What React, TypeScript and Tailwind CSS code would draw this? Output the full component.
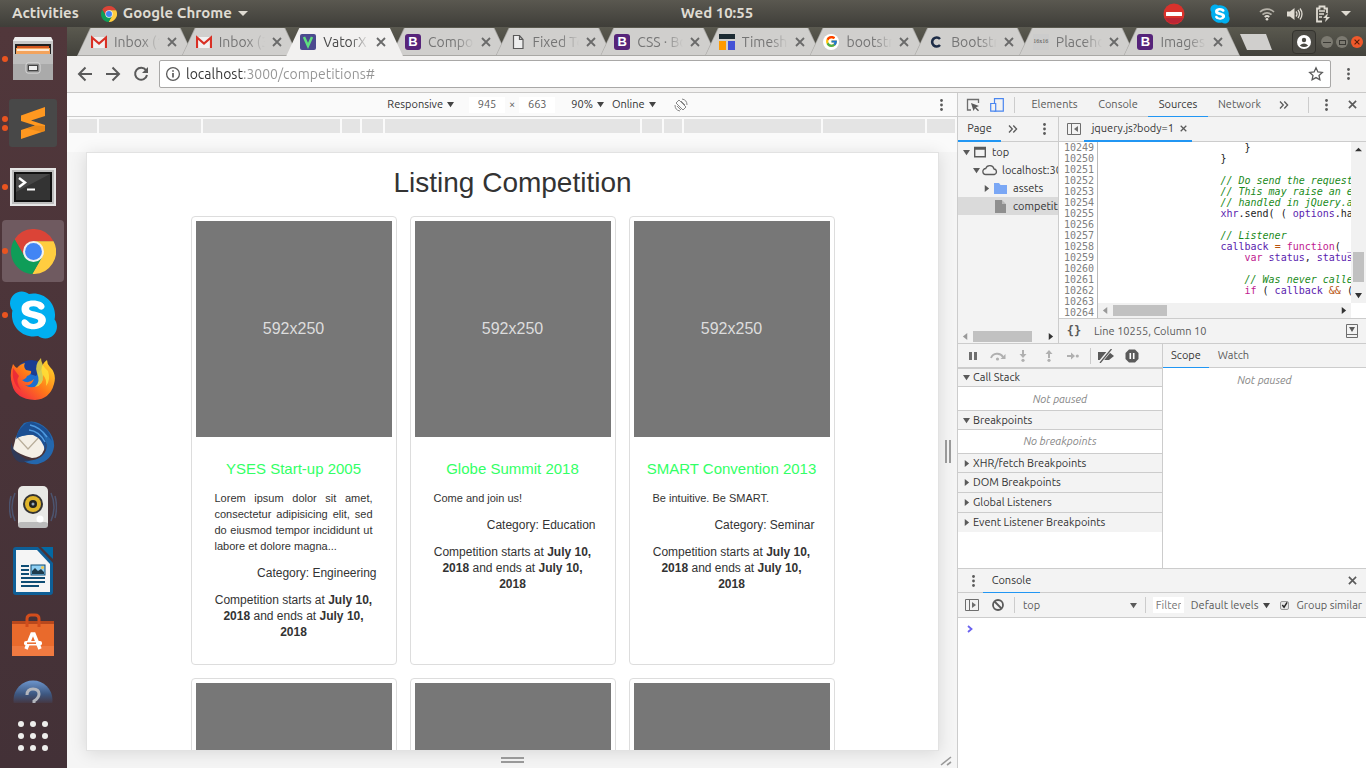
import React from 'react';
import { FaSkype } from 'react-icons/fa';
import { FcGoogle } from 'react-icons/fc';

/* ---------- small shared pieces ---------- */

function Cross({ className = 'size-2 text-[#5a5a5a]' }: { className?: string }) {
  return (
    <svg viewBox="0 0 10 10" className={className} fill="none" stroke="currentColor" strokeWidth="1.8">
      <path d="M1 1l8 8M9 1l-8 8" />
    </svg>
  );
}

function Dots({ className = 'h-3 w-[3px] text-[#5a5a5a]' }: { className?: string }) {
  return (
    <svg viewBox="0 0 3 12" className={className} fill="currentColor">
      <circle cx="1.5" cy="1.5" r="1.4" />
      <circle cx="1.5" cy="6" r="1.4" />
      <circle cx="1.5" cy="10.5" r="1.4" />
    </svg>
  );
}

function Chevrons() {
  return (
    <svg viewBox="0 0 10 8" className="h-2 w-2.5 text-[#5a5a5a]" fill="none" stroke="currentColor" strokeWidth="1.3">
      <path d="M1 .5L4.300 4 1 7.500M5.300 .5L8.600 4 5.300 7.500" />
    </svg>
  );
}

function Tri({ dir, className = 'text-[#5a5a5a]' }: { dir: 'down' | 'right' | 'left' | 'up'; className?: string }) {
  const d = {
    down: 'M0 1h8L4 7z',
    up: 'M0 6h8L4 2z',
    right: 'M2 0v8l5-4z',
    left: 'M6 0v8L1 4z',
  }[dir];
  return (
    <svg viewBox="0 0 8 8" className={`size-[7px] shrink-0 ${className}`} fill="currentColor">
      <path d={d} />
    </svg>
  );
}

function ChromeLogo({ className }: { className: string }) {
  return (
    <svg viewBox="2 2 44 44" className={className}>
      <path fill="#db4437" d="M5.540 12.030A22 22 0 0 1 43.600 14H24L15.340 29z" />
      <path fill="#ffcd40" d="M43.600 14A22 22 0 0 1 22.860 45.970L32.660 29 24 14z" />
      <path fill="#0f9d58" d="M22.860 45.970A22 22 0 0 1 5.540 12.030L15.340 29h17.320z" />
      <circle cx="24" cy="24" r="10.200" fill="#f1f1f1" />
      <circle cx="24" cy="24" r="8.200" fill="#4285f4" />
    </svg>
  );
}

function SkypeLogo({ className }: { className: string }) {
  return (
    <span className="relative flex items-center justify-center">
      <span className="absolute inset-[20%] rounded-full bg-white" />
      <FaSkype className={`relative text-[#00aff0] ${className}`} />
    </span>
  );
}

/* ---------- top bar ---------- */

function TopBar() {
  return (
    <header className="grid h-[27px] shrink-0 grid-cols-[1fr_auto_1fr] items-center bg-linear-to-b from-[#5a5850] to-[#3f3e39] text-[15px] font-bold text-[#dfdbd2]">
      <div className="flex items-center pl-3">
        <button className="mr-[22px]">Activities</button>
        <ChromeLogo className="mr-1.5 size-4" />
        <button className="flex items-center gap-1.5">
          Google Chrome
          <svg viewBox="0 0 10 6" className="h-1.5 w-2.5" fill="currentColor"><path d="M0 0h10L5 5z" /></svg>
        </button>
      </div>
      <div className="pl-[68px]">Wed 10:55</div>
      <div className="flex items-center justify-end pr-[15px]">
        <svg viewBox="0 0 22 22" className="mr-6 size-[22px]">
          <circle cx="11" cy="11" r="10.500" fill="#d8322c" />
          <path d="M2 15a10 10 0 0 0 18 0z" fill="#a81d3c" opacity=".6" />
          <rect x="3" y="9" width="16" height="4" rx=".5" fill="#fff" />
        </svg>
        <span className="mr-7"><SkypeLogo className="size-[22px]" /></span>
        <svg viewBox="0 0 16 16" className="mr-3 size-4" fill="none" stroke="currentColor" strokeWidth="1.700">
          <path d="M1 6a10 10 0 0 1 14 0M3.500 8.700a6.500 6.500 0 0 1 9 0" opacity=".7" />
          <path d="M5.700 11a3.500 3.500 0 0 1 4.600 0" />
          <circle cx="8" cy="13.300" r="1.300" fill="currentColor" stroke="none" />
        </svg>
        <svg viewBox="0 0 16 16" className="mr-3 size-4" fill="currentColor">
          <path d="M0 5.500h3L7.500 2v12L3 10.500H0z" />
          <path d="M9 5.500q2 2.500 0 5M11 4q3 4 0 8M13 2.500q4 5.500 0 11" fill="none" stroke="currentColor" strokeWidth="1.300" />
        </svg>
        <svg viewBox="0 0 16 18" className="mr-2.5 h-[18px] w-4" fill="none" stroke="currentColor" strokeWidth="1.800">
          <path d="M7 16.500H2v-13h2.500v-2h5v2H12V8" />
          <path d="M4 6h6M4 9h5M4 12h3" strokeWidth="1.500" />
          <path d="M13 8l-5 5h3l-1 4 5-5h-3z" fill="currentColor" stroke="none" />
        </svg>
        <svg viewBox="0 0 10 6" className="h-1.5 w-2.5" fill="currentColor"><path d="M0 0h10L5 5z" /></svg>
      </div>
    </header>
  );
}

/* ---------- dock ---------- */

const FilesIcon = () => (
  <svg viewBox="0 0 44 46" className="h-[46px] w-11">
    <path d="M4 1h36l2 4v39H2V5z" fill="#c9c9c9" />
    <path d="M4 1h36l2 4H2z" fill="#eee" />
    <rect x="4" y="8" width="36" height="11" fill="#222" />
    <path d="M6 10h32v9H6z" fill="#d2551f" />
    <path d="M5 12h34v7H5z" fill="#f3a35c" />
    <path d="M6 14h32" stroke="#fff" strokeWidth="1.500" />
    <path d="M2 18h40v26H2z" fill="#aaa" />
    <path d="M2 18h40v10H2z" fill="#bdbdbd" />
    <rect x="15" y="27" width="14" height="10" rx="2" fill="#888" stroke="#ddd" />
    <rect x="17.500" y="29.500" width="9" height="5" fill="#eee" stroke="#444" />
  </svg>
);

const SublimeIcon = () => (
  <svg viewBox="0 0 48 48" className="size-12">
    <rect width="48" height="48" rx="3" fill="#484848" />
    <path d="M12 16.500L36 8v9l-14 4.500L36 26v6L12 40v-9l14-4.500L12 22z" fill="#ff9820" />
    <path d="M18 29.500l8-3 10 .5v5l-3 1z" fill="#d97b12" opacity=".55" />
  </svg>
);

const TerminalIcon = () => (
  <svg viewBox="0 0 46 38" className="h-[38px] w-[46px]">
    <rect x="1" y="1" width="44" height="36" fill="#bdbdbd" stroke="#e6e6e6" strokeWidth="2" />
    <rect x="4" y="4" width="38" height="30" fill="#111" />
    <rect x="6" y="6" width="34" height="26" fill="#333" />
    <path d="M6 6h34L6 24z" fill="#555" opacity=".6" />
    <path d="M9 10l6 4.500L9 19" fill="none" stroke="#fff" strokeWidth="2.400" />
    <path d="M17 21.500h8" stroke="#fff" strokeWidth="2" />
  </svg>
);

const FirefoxIcon = () => (
  <svg viewBox="0 0 46 46" className="size-[46px]">
    <defs>
      <linearGradient id="ffa" x1="0" y1="1" x2="1" y2="0">
        <stop offset="0" stopColor="#f0124f" />
        <stop offset=".5" stopColor="#ff7a18" />
        <stop offset="1" stopColor="#ffe52e" />
      </linearGradient>
    </defs>
    <circle cx="23" cy="23" r="17" fill="#1b6fd0" />
    <path d="M22 4a19 19 0 0 1 12 6l-8 10-12-4-5-7q6-5 13-5z" fill="#1a3d92" />
    <path d="M3 8q2 3 4 4 3-4 8-5-2 4 1 7l5 1q1 3-4 5-1 3-5 4 6 5 12-1-3 8-9 6 5 4 12 1 8-4 5-13-2-8 5-13 0 4 3 7 7 7 4 17-4 15-19 16Q5 43 2 28-1 18 3 8z" fill="url(#ffa)" />
    <path d="M31 2q-7 7-4 15 4 9-2 14 9-2 8-12 4 4 3 11 5-6 2-15-7-6-7-13z" fill="#ffe53b" opacity=".8" />
    <path d="M3 12q-2 15 8 22-6-9-2-14z" fill="#e8203a" opacity=".8" />
  </svg>
);

const ThunderbirdIcon = () => (
  <svg viewBox="0 0 46 46" className="size-[46px]">
    <path d="M14 3Q26-2 37 9q8 9 7 18-2 13-16 17-8 1-14-3 18 0 22-11 2-8-4-13-8-5-15-2L5 22Q7 10 14 3z" fill="#2467ad" />
    <path d="M6 17l24-4q7 8 4 17-3 8-12 8-12-3-19-9z" fill="#f4efe6" />
    <path d="M8 18l10 11 13-14" fill="none" stroke="#b8ad9a" strokeWidth="1.200" />
    <path d="M13 6Q19-1 27 4q12 3 15 17-4-6-10-8 6 9 3 18-2-12-12-16-9-1-17 4 1-8 7-13z" fill="#1c4f92" />
    <path d="M20 5q10 2 17 12M19 10q10 1 16 12" fill="none" stroke="#4f9ae0" strokeWidth="1.500" />
    <path d="M1 22q2 9 9 13 5 5 11 5-9 5-15 0-6-7-5-18z" fill="#173f77" opacity=".5" />
  </svg>
);

const SpeakerIcon = () => (
  <svg viewBox="0 0 48 46" className="h-[46px] w-12">
    <path d="M6 9q-6 14 0 28M2 12q-3 11 0 22M42 9q6 14 0 28M46 12q3 11 0 22" fill="none" stroke="#4f6386" strokeWidth="1.500" opacity=".7" />
    <rect x="9" y="2" width="30" height="42" rx="5" fill="#e9e9e6" />
    <rect x="9" y="38" width="30" height="6" rx="3" fill="#bbb" />
    <circle cx="24" cy="20" r="10" fill="#333" />
    <circle cx="24" cy="20" r="8" fill="#e0b52a" />
    <circle cx="24" cy="20" r="4" fill="#222" />
    <circle cx="24" cy="20" r="1.500" fill="#9ab" />
    <circle cx="31" cy="35" r="3.500" fill="#fff" />
  </svg>
);

const WriterIcon = () => (
  <svg viewBox="0 0 40 48" className="h-12 w-10">
    <path d="M3 0h22l15 16v29q0 3-3 3H3q-3 0-3-3V3q0-3 3-3z" fill="#0e5f97" />
    <path d="M28 0h12v12z" fill="#0369a3" />
    <path d="M3 3h21l13 14v28H3z" fill="#f5f5f5" />
    <path d="M8 19h8M8 23h8M8 27h8M8 31h24M8 35h24M8 39h18" stroke="#0e4d74" strokeWidth="1.800" />
    <rect x="18" y="18" width="14" height="10" fill="#8fd0f4" stroke="#0e4d74" />
    <path d="M19 27v-3l3-3 3 3 3-2 3 3v2z" fill="#1e3c4c" />
    <circle cx="29.500" cy="20.500" r="1.500" fill="#f5c84c" />
  </svg>
);

const SoftwareIcon = () => (
  <svg viewBox="0 0 42 44" className="h-11 w-[42px]">
    <path d="M0 8h42v35H0z" fill="#e96a2c" />
    <path d="M0 8h42v3H0z" fill="#b8481d" />
    <path d="M0 33h42v10H0z" fill="#f07a41" />
    <path d="M15 14V6q0-4 4-4h4q4 0 4 4v8" fill="none" stroke="#d24d1c" strokeWidth="3" />
    <path d="M14 36l6-15h2l6 15" fill="none" stroke="#fff" strokeWidth="3.500" />
    <rect x="12" y="28" width="18" height="4.500" rx="2" fill="#fff" />
    <path d="M15 30.200h9" stroke="#e96a2c" strokeWidth="1.500" />
  </svg>
);

type DockItem = { name: string; dots: number; icon: React.ReactNode; active?: boolean };
const dock: DockItem[] = [
  { name: 'Files', dots: 1, icon: <FilesIcon /> },
  { name: 'Sublime Text', dots: 2, icon: <SublimeIcon /> },
  { name: 'Terminal', dots: 1, icon: <TerminalIcon /> },
  { name: 'Google Chrome', dots: 1, icon: <ChromeLogo className="size-[45px]" />, active: true },
  { name: 'Skype', dots: 1, icon: <SkypeLogo className="h-[54px] w-[47px]" /> },
  { name: 'Firefox', dots: 0, icon: <FirefoxIcon /> },
  { name: 'Thunderbird', dots: 0, icon: <ThunderbirdIcon /> },
  { name: 'Rhythmbox', dots: 0, icon: <SpeakerIcon /> },
  { name: 'LibreOffice Writer', dots: 0, icon: <WriterIcon /> },
  { name: 'Ubuntu Software', dots: 0, icon: <SoftwareIcon /> },
];

function Dock() {
  return (
    <nav className="flex w-[67px] shrink-0 flex-col bg-linear-to-b from-[#51373b] to-[#433137]">
      <div className="flex min-h-0 flex-1 flex-col overflow-hidden">
        {dock.map((d) => (
          <div key={d.name} className="flex h-16 shrink-0 items-center">
            <button
              aria-label={d.name}
              className={`relative ml-0.5 flex h-[62px] w-[62px] items-center justify-center rounded ${d.active ? 'bg-[#6f5a60]' : ''}`}
            >
              {d.icon}
              <span className="absolute left-0 flex flex-col gap-[3px]">
                {Array.from({ length: d.dots }, (_, i) => (
                  <i key={i} className="size-1.5 rounded-full bg-[#e95420]" />
                ))}
              </span>
            </button>
          </div>
        ))}
        <div className="flex h-16 shrink-0 justify-center pt-[13px] pr-px">
          <svg viewBox="0 0 40 40" className="size-10">
            <defs>
              <linearGradient id="hf" x1="0" y1="0" x2="0" y2="1">
                <stop offset="0" stopColor="#6c95cc" />
                <stop offset=".35" stopColor="#3d5780" />
                <stop offset=".62" stopColor="#463238" />
              </linearGradient>
            </defs>
            <circle cx="20" cy="20" r="19.500" fill="url(#hf)" />
            <path d="M14 15q0-6 6-6t6 5q0 4-5 7v4" fill="none" stroke="#b3b6bd" strokeWidth="3" />
          </svg>
        </div>
      </div>
      <button aria-label="Show applications" className="grid h-[65px] grid-cols-[repeat(3,6px)] content-center justify-center gap-1.5 pr-px">
        {Array.from({ length: 9 }, (_, i) => (
          <i key={i} className="size-1.5 rounded-full bg-[#eeeeec]" />
        ))}
      </button>
    </nav>
  );
}

/* ---------- browser frame ---------- */

const Gmail = () => (
  <svg viewBox="0 0 16 16" className="size-4">
    <path d="M1 3h14v11H1z" fill="#f1f1f1" />
    <path d="M1 14V3.500l7 6 7-6V14" fill="none" stroke="#d93025" strokeWidth="2.200" />
  </svg>
);
const Boot = () => (
  <span className="flex size-4 items-center justify-center rounded-[3px] bg-[#56247a] font-['Liberation_Sans'] text-[13px] font-bold text-white">B</span>
);

const tabs: { title: string; icon: React.ReactNode; active?: boolean }[] = [
  { title: 'Inbox (1)', icon: <Gmail /> },
  { title: 'Inbox (3)', icon: <Gmail /> },
  {
    title: 'VatorX',
    active: true,
    icon: (
      <svg viewBox="0 0 16 16" className="size-4">
        <rect width="16" height="16" rx="2" fill="#4c4a8f" />
        <path d="M4 3l4 9 4-9" fill="none" stroke="#5fe07f" strokeWidth="2.500" />
      </svg>
    ),
  },
  { title: 'Compon', icon: <Boot /> },
  {
    title: 'Fixed To',
    icon: (
      <svg viewBox="0 0 16 16" className="size-4" fill="#eee" stroke="#5a5a5a" strokeWidth="1.200">
        <path d="M3.500 1.500h6l3.500 4v9H3.500zM9.500 1.500v4H13" />
      </svg>
    ),
  },
  { title: 'CSS · Bo', icon: <Boot /> },
  {
    title: 'Timeshe',
    icon: (
      <svg viewBox="0 0 16 16" className="size-4">
        <path d="M0 0h16v5H0z" fill="#1c2b33" />
        <path d="M0 7h7v9H0z" fill="#ff9a00" />
        <path d="M9 7h7v9H9z" fill="#4352d6" />
      </svg>
    ),
  },
  { title: 'bootstra', icon: <span className="flex size-4 items-center justify-center rounded-full bg-white"><FcGoogle className="size-[13px]" /></span> },
  {
    title: 'Bootstra',
    icon: (
      <svg viewBox="0 0 16 16" className="size-4" fill="none" stroke="#1d2c47" strokeWidth="2.600">
        <path d="M12 5a4.500 4.500 0 1 0 0 6" />
      </svg>
    ),
  },
  { title: 'Placeho', icon: <span className="flex size-4 items-center justify-center bg-[#ccc] font-['Liberation_Serif'] text-[6px] text-[#555]">16x16</span> },
  { title: 'Images', icon: <Boot /> },
];

function TabStrip() {
  return (
    <div className="flex h-[29px] shrink-0 items-end bg-linear-to-b from-[#5a594f] to-[#43423c] pl-2.5">
      <div className="flex min-w-0 flex-1">
        {tabs.map((t, i) => (
          <div
            key={i}
            className={`-mr-3 flex h-7 min-w-0 flex-1 [clip-path:polygon(0_100%,13px_0,calc(100%-13px)_0,100%_100%)] ${t.active ? 'relative z-10 bg-[#f2f1f0]' : 'bg-[#a9a8a5]'}`}
          >
            <div
              className={`mx-px flex min-w-0 flex-1 items-center pl-[13px] [clip-path:polygon(0_100%,13px_0,calc(100%-13px)_0,100%_100%)] ${t.active ? 'bg-[#f2f1f0] text-[#4a4a4a]' : 'mb-px bg-[#d0cfcd] text-[#757575]'}`}
            >
              <span className="shrink-0">{t.icon}</span>
              <button className="ml-[7px] w-[46px] shrink-0 overflow-hidden text-left text-sm whitespace-nowrap [mask-image:linear-gradient(to_right,black_60%,transparent)]">
                {t.title}
              </button>
              <button aria-label={`Close ${t.title}`} className="ml-[7px]"><Cross className="size-2.5 text-[#6a6a6a]" /></button>
            </div>
          </div>
        ))}
      </div>
      <button aria-label="New tab" className="mb-1.5 ml-3 h-4 w-8 bg-[#d0cfcd] [clip-path:polygon(0_0,26px_0,100%_100%,7px_100%)]" />
      <button aria-label="Profile" className="mb-0.5 ml-5 flex h-6 w-6 items-center justify-center rounded border border-[#34332e] bg-[#4b4a44]">
        <svg viewBox="0 0 14 14" className="size-3.5">
          <circle cx="7" cy="7" r="7" fill="#fff" />
          <circle cx="7" cy="5" r="2.200" fill="#4b4a44" />
          <path d="M2.800 10.500q4.200-4 8.400 0-4.200 3-8.400 0z" fill="#4b4a44" />
        </svg>
      </button>
      <div className="mb-2 ml-[5px] flex gap-[3px] pr-[3px]">
        <button aria-label="Minimise" className="flex size-3 items-center justify-center rounded-full bg-[#7c7a71]"><i className="h-px w-2 bg-[#3a3934]" /></button>
        <button aria-label="Maximise" className="flex size-3 items-center justify-center rounded-full bg-[#7c7a71]"><i className="h-[5px] w-[7px] border border-[#3a3934]" /></button>
        <button aria-label="Close" className="flex size-3 items-center justify-center rounded-full bg-[#f0592b]"><Cross className="size-1.5 text-[#5a1d08]" /></button>
      </div>
    </div>
  );
}

function UrlBar() {
  return (
    <div className="flex h-[37px] shrink-0 items-center border-b border-[#c9c8c7] bg-[#f2f1f0] pr-4 pl-2.5 text-[#5a5a5a]">
      <button aria-label="Back" className="mr-3">
        <svg viewBox="0 0 16 16" className="size-4" fill="none" stroke="currentColor" strokeWidth="2"><path d="M15 8H2M8.500 1.500L2 8l6.500 6.500" /></svg>
      </button>
      <button aria-label="Forward" className="mr-3">
        <svg viewBox="0 0 16 16" className="size-4" fill="none" stroke="currentColor" strokeWidth="2"><path d="M1 8h13M7.500 1.500L14 8l-6.500 6.500" /></svg>
      </button>
      <button aria-label="Reload" className="mr-2.5">
        <svg viewBox="0 0 16 16" className="size-4" fill="none" stroke="currentColor" strokeWidth="2">
          <path d="M13 4.200A6 6 0 1 0 14 9" />
          <path d="M15 1v6H9z" fill="currentColor" stroke="none" />
        </svg>
      </button>
      <div className="flex h-7 min-w-0 flex-1 items-center rounded-[2px] border border-[#a9a8a7] bg-white pr-1.5 pl-[5px]">
        <svg viewBox="0 0 16 16" className="size-4 shrink-0" fill="none" stroke="currentColor" strokeWidth="1.300">
          <circle cx="8" cy="8" r="6.400" />
          <path d="M8 7v4.500M8 4.200v1.600" strokeWidth="1.700" />
        </svg>
        <input
          aria-label="Address"
          defaultValue="localhost:3000/competitions#"
          className="ml-[5px] min-w-0 flex-1 bg-linear-to-r from-[#333] from-[58px] to-[#949494] to-[58px] bg-clip-text text-sm text-transparent outline-none"
        />
        <svg viewBox="0 0 16 16" className="size-4" fill="none" stroke="currentColor" strokeWidth="1.300">
          <path d="M8 1.800l1.900 4.100 4.400.5-3.300 3 .9 4.400L8 11.600l-3.900 2.200.9-4.400-3.300-3 4.400-.5z" />
        </svg>
      </div>
      <button aria-label="Menu" className="ml-4"><Dots className="h-3.5 w-[3px] text-[#5a5a5a]" /></button>
    </div>
  );
}

/* ---------- emulated device ---------- */

function BarSelect({ label, value, className }: { label: string; value: string; className: string }) {
  return (
    <label className={`flex items-center ${className}`}>
      <select aria-label={label} className="mr-1 appearance-none outline-none [field-sizing:content]" defaultValue={value}>
        <option>{value}</option>
      </select>
      <Tri dir="down" className="text-[#444]" />
    </label>
  );
}

type Comp = { title: string; text: string; category: string };
const comps: Comp[] = [
  {
    title: 'YSES Start-up 2005',
    text: 'Lorem ipsum dolor sit amet, consectetur adipisicing elit, sed do eiusmod tempor incididunt ut labore et dolore magna...',
    category: 'Engineering',
  },
  { title: 'Globe Summit 2018', text: 'Come and join us!', category: 'Education' },
  { title: 'SMART Convention 2013', text: 'Be intuitive. Be SMART.', category: 'Seminar' },
];

function Thumb({ children }: { children?: React.ReactNode }) {
  return (
    <div className="flex h-[216px] items-center justify-center bg-[#777] text-base text-[#ddd]">
      {children}
    </div>
  );
}

function CompetitionCard({ c }: { c: Comp }) {
  return (
    <article className="rounded-[4px] border border-[#ddd] p-1 pb-6">
      <Thumb>592x250</Thumb>
      <div className="flex flex-col gap-[11px] px-[19px] pt-[22px] text-xs leading-4">
        <h3 className="-mx-4 text-center text-[15px] leading-5 text-[#33ff66]"><a href="#">{c.title}</a></h3>
        <p className="text-justify text-[11px] leading-4">{c.text}</p>
        <p className="-mr-1 text-right">Category: {c.category}</p>
        <p className="text-center">
          Competition starts at <b>July 10, 2018</b> and ends at <b>July 10, 2018</b>
        </p>
      </div>
    </article>
  );
}

function DevicePane() {
  return (
    <section className="flex min-w-0 flex-1 flex-col bg-[#f5f5f5]">
      <div className="relative flex h-6 shrink-0 items-center justify-center border-b border-[#ccc] bg-[#fafafa] pl-[51px] text-[11px] text-[#333]">
        <BarSelect label="Device" value="Responsive" className="mr-[15px]" />
        <input aria-label="Width" defaultValue="945" className="h-4 w-9 bg-white text-center text-[#5a5a5a]" />
        <span className="mx-1 text-[#5a5a5a]">×</span>
        <input aria-label="Height" defaultValue="663" className="h-4 w-9 bg-white text-center text-[#5a5a5a]" />
        <BarSelect label="Zoom" value="90%" className="ml-4" />
        <BarSelect label="Throttling" value="Online" className="ml-2" />
        <button aria-label="Rotate" className="ml-[18px]">
          <svg viewBox="0 0 14 14" className="size-3.5" fill="none" stroke="#888">
            <path d="M2 5l3-3 7 7-3 3z" />
            <path d="M8 1a6 6 0 0 1 5 6M6 13a6 6 0 0 1-5-6M3 8l4 4M7 3l4 4" />
          </svg>
        </button>
        <button aria-label="More options" className="absolute right-3.5"><Dots /></button>
      </div>
      <div className="grid shrink-0 grid-cols-[28fr_102fr_137fr_18fr_21fr_255fr_20fr_18fr_137fr_102fr_28fr] gap-x-0.5 bg-[#fafafa] px-0.5 pt-0.5 pb-[19px]">
        {Array.from({ length: 11 }, (_, i) => (
          <i key={i} className="h-3.5 bg-[#e4e4e4]" />
        ))}
      </div>
      <div className="flex min-h-0 flex-1">
        <main className="ml-[19px] min-w-0 flex-1 overflow-hidden border border-[#e2e2e2] bg-white font-['Liberation_Sans',Arial,sans-serif] text-[#333] shadow-[0_2px_16px_rgba(0,0,0,0.12)]">
          <h1 className="mt-3 mb-[15px] text-center text-[28px] leading-9">Listing Competition</h1>
          <div className="mx-auto grid w-[644px] grid-cols-3 gap-[13px]">
            {comps.map((c) => <CompetitionCard key={c.title} c={c} />)}
            {comps.map((c) => (
              <article key={c.title} className="rounded-[4px] border border-[#ddd] p-1"><Thumb /></article>
            ))}
          </div>
        </main>
        <div className="flex w-[18px] shrink-0 items-center justify-center gap-0.5">
          <i className="h-[23px] w-0.5 bg-[#999]" />
          <i className="h-[23px] w-0.5 bg-[#999]" />
        </div>
      </div>
      <div className="flex h-[17px] shrink-0 items-center">
        <div className="ml-[19px] flex flex-1 flex-col items-center gap-0.5">
          <i className="h-0.5 w-[23px] bg-[#999]" />
          <i className="h-0.5 w-[23px] bg-[#999]" />
        </div>
        <svg viewBox="0 0 14 14" className="mr-1 size-3.5" stroke="#999" strokeWidth="1.600"><path d="M2 12L12 4M8 12l4-3" /></svg>
      </div>
    </section>
  );
}

/* ---------- developer tools ---------- */

const Sep = ({ className = '' }: { className?: string }) => <i className={`h-4 w-px shrink-0 bg-[#ccc] ${className}`} />;

function ToolsBar() {
  const items = [
    { t: 'Elements', w: 'w-[67px]' },
    { t: 'Console', w: 'w-[60px]' },
    { t: 'Sources', w: 'w-[60px]' },
    { t: 'Network', w: 'w-[63px]' },
  ];
  return (
    <div className="flex h-6 shrink-0 items-stretch border-b border-[#ccc] bg-[#f3f3f3]">
      <button aria-label="Inspect" className="ml-2">
        <svg viewBox="0 0 14 14" className="size-3.5" fill="none" stroke="#6e6e6e" strokeWidth="1.300">
          <path d="M5 12H1.500V1.500h11V5" />
          <path d="M5 5l8 3-3 1.300 3 3-1 1-3-3L7.500 13z" fill="#5a5a5a" stroke="none" />
        </svg>
      </button>
      <button aria-label="Toggle device" className="ml-2.5">
        <svg viewBox="0 0 14 14" className="size-3.5" fill="#f3f3f3" stroke="#4a86f0" strokeWidth="1.200">
          <path d="M4.500.7h8.800v12.500H4.500z" />
          <path d="M.7 5.500h5v7.700h-5z" />
        </svg>
      </button>
      <Sep className="ml-2.5 self-center" />
      <div className="ml-1.5 flex">
        {items.map((i) => (
          <button key={i.t} className={`${i.w} -mb-px border-b ${i.t === 'Sources' ? 'border-[#2196f3] text-[#333]' : 'border-transparent text-[#5a5a5a]'}`}>{i.t}</button>
        ))}
      </div>
      <button aria-label="More tabs" className="ml-2"><Chevrons /></button>
      <span className="flex-1" />
      <Sep className="self-center" />
      <button aria-label="Customise" className="ml-4"><Dots /></button>
      <button aria-label="Close tools" className="mr-[9px] ml-5"><Cross className="size-[9px] text-[#5a5a5a]" /></button>
    </div>
  );
}

const P = ({ children }: { children: React.ReactNode }) => <span className="text-[#5a1cae]">{children}</span>;
const K = ({ children }: { children: React.ReactNode }) => <span className="text-[#c0208f]">{children}</span>;
const C = ({ children }: { children: React.ReactNode }) => <i className="text-[#1a8a1a]">{children}</i>;
const O = ({ children }: { children: React.ReactNode }) => <span className="text-[#b8540f]">{children}</span>;

const code: React.ReactNode[] = [
  <>{' '.repeat(24)}{'}'}</>,
  <>{' '.repeat(20)}{'}'}</>,
  '',
  <>{' '.repeat(20)}<C>// Do send the request</C></>,
  <>{' '.repeat(20)}<C>// This may raise an e</C></>,
  <>{' '.repeat(20)}<C>// handled in jQuery.a</C></>,
  <>{' '.repeat(20)}<P>xhr</P>.send( ( <P>options</P>.ha</>,
  '',
  <>{' '.repeat(20)}<C>// Listener</C></>,
  <>{' '.repeat(20)}<P>callback</P> <O>=</O> <K>function</K>( <P>_</P></>,
  <>{' '.repeat(24)}<K>var</K> <P>status</P>, <P>status</P></>,
  '',
  <>{' '.repeat(24)}<C>// Was never calle</C></>,
  <>{' '.repeat(24)}<K>if</K> ( <P>callback</P> <O>&amp;&amp;</O> (</>,
];

function Navigator() {
  return (
    <div className="flex w-[101px] shrink-0 flex-col overflow-hidden border-r border-[#ccc] bg-[#f3f3f3]">
      <div className="flex h-[25px] shrink-0 border-b border-[#ccc]">
        <button className="-mb-px w-[43px] border-b-2 border-[#2196f3] text-[#333]">Page</button>
        <button aria-label="More panes" className="ml-[7px]"><Chevrons /></button>
        <button aria-label="Options" className="ml-[25px]"><Dots /></button>
      </div>
      <ul className="flex-1 pt-px leading-[18px] whitespace-nowrap text-[#333]">
        <li className="flex items-center pl-[5px]">
          <Tri dir="down" />
          <svg viewBox="0 0 12 12" className="mr-1.5 ml-1 size-3 shrink-0" fill="none" stroke="#5a5a5a" strokeWidth="1.400"><path d="M.7 1.500h10.600v9.200H.7zM.7 3h10.600" /></svg>
          top
        </li>
        <li className="flex items-center pl-[15px]">
          <Tri dir="down" />
          <svg viewBox="0 0 16 12" className="mr-1 ml-0.5 h-3 w-4 shrink-0" fill="none" stroke="#5a5a5a" strokeWidth="1.300"><path d="M4 10.500a3 3 0 0 1-.3-6A4.300 4.300 0 0 1 12 5a2.800 2.800 0 0 1 .3 5.500z" /></svg>
          localhost:3000
        </li>
        <li className="flex items-center pl-[25px]">
          <Tri dir="right" />
          <svg viewBox="0 0 13 12" className="mr-1.5 ml-1 h-3 w-[13px] shrink-0" fill="#7aa7f5"><path d="M0 1h5l1.500 2H13v9H0z" /></svg>
          assets
        </li>
        <li className="flex items-center bg-[#dadada] pl-[37px]">
          <svg viewBox="0 0 11 13" className="mr-[7px] h-[13px] w-[11px] shrink-0" fill="#8f8f8f"><path d="M0 0h7v4h4v9H0z" /><path d="M7 0l4 4H7z" fill="#bbb" /></svg>
          competitions
        </li>
      </ul>
      <div className="flex h-3.5 items-center pr-1 pl-1">
        <Tri dir="left" className="text-[#999]" />
        <i className="ml-1 h-[11px] w-[59px] bg-[#c1c1c1]" />
        <span className="flex-1" />
        <Tri dir="right" className="text-[#333]" />
      </div>
    </div>
  );
}

function Editor() {
  return (
    <div className="flex min-w-0 flex-1 flex-col">
      <div className="flex h-[25px] shrink-0 border-b border-[#ccc] bg-[#f3f3f3]">
        <button aria-label="Hide navigator" className="ml-2">
          <svg viewBox="0 0 14 12" className="h-3 w-3.5" fill="none" stroke="#6e6e6e"><path d="M.5.500h13v11H.5zM4.500.500v11" /><path d="M11 3v6L7 6z" fill="#6e6e6e" stroke="none" /></svg>
        </button>
        <div className="-mb-px ml-[3px] flex w-[108px] items-center justify-end gap-1.5 border-b-2 border-[#2196f3] pr-[5px] text-[#333]">
          <button>jquery.js?body=1</button>
          <button aria-label="Close file"><Cross className="size-[7px] text-[#5a5a5a]" /></button>
        </div>
      </div>
      <div className="flex bg-white font-['DejaVu_Sans_Mono',monospace] text-[10px] leading-[11px]">
        <div className="w-[39px] shrink-0 border-r border-[#bbb] pr-[3px] text-right text-[#808080]">
          {Array.from({ length: 16 }, (_, i) => <div key={i}>{10249 + i}</div>)}
        </div>
        <div className="flex min-w-0 flex-1 flex-col">
          <div className="flex min-h-0 flex-1">
            <pre className="min-w-0 flex-1 overflow-hidden pl-0.5 font-['DejaVu_Sans_Mono',monospace] text-[#222]">
              {code.map((l, i) => <div key={i} className="h-[11px]">{l}</div>)}
            </pre>
            <div className="flex w-[15px] shrink-0 flex-col items-center bg-[#f1f1f1] py-1">
              <Tri dir="up" className="text-[#333]" />
              <span className="flex-[98]" />
              <i className="h-[30px] w-[11px] bg-[#c1c1c1]" />
              <span className="flex-[10]" />
              <Tri dir="down" className="text-[#333]" />
            </div>
          </div>
          <div className="mr-[15px] flex h-[15px] shrink-0 items-center bg-[#f1f1f1] px-1">
            <Tri dir="left" className="text-[#999]" />
            <i className="ml-1 h-[11px] w-[54px] bg-[#c1c1c1]" />
            <span className="flex-1" />
            <Tri dir="right" className="text-[#333]" />
          </div>
        </div>
      </div>
      <div className="flex h-[25px] shrink-0 items-center border-t border-[#ccc] bg-[#f3f3f3] pr-2 pl-[7px] text-[#5a5a5a]">
        <button aria-label="Pretty print" className="w-4 font-['DejaVu_Sans_Mono',monospace] text-xs font-bold">{'{}'}</button>
        <span className="ml-3">Line 10255, Column 10</span>
        <span className="flex-1" />
        <svg viewBox="0 0 12 14" className="h-3.5 w-3" fill="none" stroke="#6e6e6e"><path d="M.5.500h11v13H.5zM.5 10.500h11" /><path d="M3 3h6L6 8z" fill="#5a5a5a" stroke="none" /></svg>
      </div>
    </div>
  );
}

function SideHeader({ title, open, className = 'h-5' }: { title: string; open?: boolean; className?: string }) {
  return (
    <button className={`flex w-full shrink-0 items-center gap-[3px] border-[#ccc] bg-[#f3f3f3] pl-[5px] text-[#333] ${className}`}>
      <Tri dir={open ? 'down' : 'right'} />
      {title}
    </button>
  );
}

function Debugger() {
  return (
    <div className="flex min-h-0 flex-1 border-t border-[#ccc]">
      <div className="flex w-[205px] shrink-0 flex-col border-r border-[#ccc] bg-white">
        <div className="flex h-[25px] shrink-0 items-center border-b-2 border-[#ccc] bg-[#f3f3f3] pl-2.5">
          <svg viewBox="0 0 10 8" className="h-2 w-2.5" fill="#6e6e6e"><path d="M1 0h3v8H1zM6 0h3v8H6z" /></svg>
          <svg viewBox="0 0 16 12" className="ml-3 h-3 w-4" fill="none" stroke="#b0b0b0" strokeWidth="1.800"><path d="M1 8a6.500 6 0 0 1 12-1" /><path d="M15.500 4v5h-5z" fill="#b0b0b0" stroke="none" /><circle cx="7.500" cy="9" r="1.600" fill="#b0b0b0" stroke="none" /></svg>
          <svg viewBox="0 0 8 12" className="ml-[13px] h-3 w-2" fill="#b0b0b0"><path d="M3 0h2v4h2.500L4 8 .5 4H3z" /><circle cx="4" cy="10.300" r="1.600" /></svg>
          <svg viewBox="0 0 8 12" className="ml-[18px] h-3 w-2" fill="#b0b0b0"><path d="M3 8h2V4h2.500L4 0 .5 4H3z" /><circle cx="4" cy="10.300" r="1.600" /></svg>
          <svg viewBox="0 0 12 8" className="ml-[14px] h-2 w-3" fill="#b0b0b0"><path d="M0 3h4V.5L8 4 4 7.500V5H0z" /><circle cx="10.300" cy="4" r="1.600" /></svg>
          <Sep className="ml-[11px]" />
          <svg viewBox="0 0 16 14" className="ml-[7px] h-3.5 w-4" fill="#5a5a5a"><path d="M0 3h11l5 4-5 4H0z" /><path d="M1.500 14L13 0" stroke="#f3f3f3" strokeWidth="3.500" /><path d="M2 14L13.500 0" stroke="#5a5a5a" strokeWidth="1.300" /></svg>
          <svg viewBox="0 0 14 14" className="ml-[11px] size-3.5"><path d="M4 .5h6L13.500 4v6L10 13.500H4L.5 10V4z" fill="#5a5a5a" /><path d="M5.300 4v6M8.700 4v6" stroke="#fff" strokeWidth="1.600" /></svg>
        </div>
        <SideHeader title="Call Stack" open className="h-[18px] border-b" />
        <p className="h-[23px] shrink-0 text-center leading-6 text-[#888] italic">Not paused</p>
        <SideHeader title="Breakpoints" open className="h-5 border-y" />
        <p className="h-[23px] shrink-0 text-center leading-[23px] text-[#888] italic">No breakpoints</p>
        <SideHeader title="XHR/fetch Breakpoints" className="h-[19px] border-t" />
        <SideHeader title="DOM Breakpoints" className="h-5 border-t" />
        <SideHeader title="Global Listeners" className="h-5 border-t" />
        <SideHeader title="Event Listener Breakpoints" className="h-5 border-t" />
      </div>
      <div className="min-w-0 flex-1 bg-white">
        <div className="flex h-6 border-b border-[#ccc] bg-[#f3f3f3]">
          <button className="-mb-px w-[46px] border-b border-[#2196f3] text-[#333]">Scope</button>
          <button className="w-[49px] text-[#5a5a5a]">Watch</button>
        </div>
        <p className="pt-1 text-center text-[#888] italic">Not paused</p>
      </div>
    </div>
  );
}

function ConsoleDrawer() {
  return (
    <div className="flex h-[200px] shrink-0 flex-col border-t border-[#ccc] bg-white">
      <div className="flex h-6 shrink-0 border-b border-[#ccc] bg-[#f3f3f3]">
        <button aria-label="Drawer menu" className="w-[25px] pl-[14px]"><Dots /></button>
        <button className="-mb-px w-[57px] border-b border-[#2196f3] text-[#333]">Console</button>
        <span className="flex-1" />
        <button aria-label="Close drawer" className="mr-[9px]"><Cross className="size-[9px] text-[#5a5a5a]" /></button>
      </div>
      <div className="flex h-[25px] shrink-0 items-center border-b border-[#ccc] bg-[#f3f3f3] pr-1 pl-[7px] text-[#5a5a5a]">
        <button aria-label="Show sidebar">
          <svg viewBox="0 0 14 12" className="h-3 w-3.5" fill="none" stroke="#6e6e6e"><path d="M.5.500h13v11H.5zM4.500.500v11" /><path d="M7 3v6l4-3z" fill="#6e6e6e" stroke="none" /></svg>
        </button>
        <button aria-label="Clear" className="ml-[13px]">
          <svg viewBox="0 0 12 12" className="size-3" fill="none" stroke="#5a5a5a" strokeWidth="1.800"><circle cx="6" cy="6" r="5" /><path d="M2.500 2.500l7 7" /></svg>
        </button>
        <Sep className="ml-2.5" />
        <label className="ml-2 flex flex-1 items-center">
          <select aria-label="Context" className="flex-1 appearance-none outline-none" defaultValue="top"><option>top</option></select>
          <Tri dir="down" />
        </label>
        <Sep className="ml-2" />
        <input aria-label="Filter" placeholder="Filter" className="ml-[7px] h-4 w-[31px] bg-white px-[3px] placeholder:text-[#777]" />
        <BarSelect label="Levels" value="Default levels" className="ml-[7px]" />
        <label className="ml-2.5 flex items-center whitespace-nowrap">
          <input type="checkbox" defaultChecked className="peer sr-only" />
          <span className="mr-2 flex size-[9px] items-center justify-center rounded-[2px] border border-[#999] bg-[#e6e6e6]">
            <svg viewBox="0 0 8 8" className="size-2" fill="none" stroke="#222" strokeWidth="1.600"><path d="M1.500 4l2 2.500L7 1" /></svg>
          </span>
          Group similar
        </label>
      </div>
      <svg viewBox="0 0 6 8" className="mt-[7px] ml-[9px] h-2 w-1.5" fill="none" stroke="#6b62f0" strokeWidth="1.800"><path d="M1 1l3.500 3L1 7" /></svg>
    </div>
  );
}

function DevTools() {
  return (
    <aside className="flex w-[409px] shrink-0 flex-col border-l border-[#ccc] text-[11px]">
      <ToolsBar />
      <div className="flex shrink-0">
        <Navigator />
        <Editor />
      </div>
      <Debugger />
      <ConsoleDrawer />
    </aside>
  );
}

export default function App() {
  return (
    <div className="flex h-screen flex-col overflow-hidden font-['Ubuntu','Noto_Sans',sans-serif]">
      <TopBar />
      <div className="flex min-h-0 flex-1">
        <Dock />
        <div className="flex min-w-0 flex-1 flex-col">
          <TabStrip />
          <UrlBar />
          <div className="flex min-h-0 flex-1">
            <DevicePane />
            <DevTools />
          </div>
        </div>
      </div>
    </div>
  );
}
